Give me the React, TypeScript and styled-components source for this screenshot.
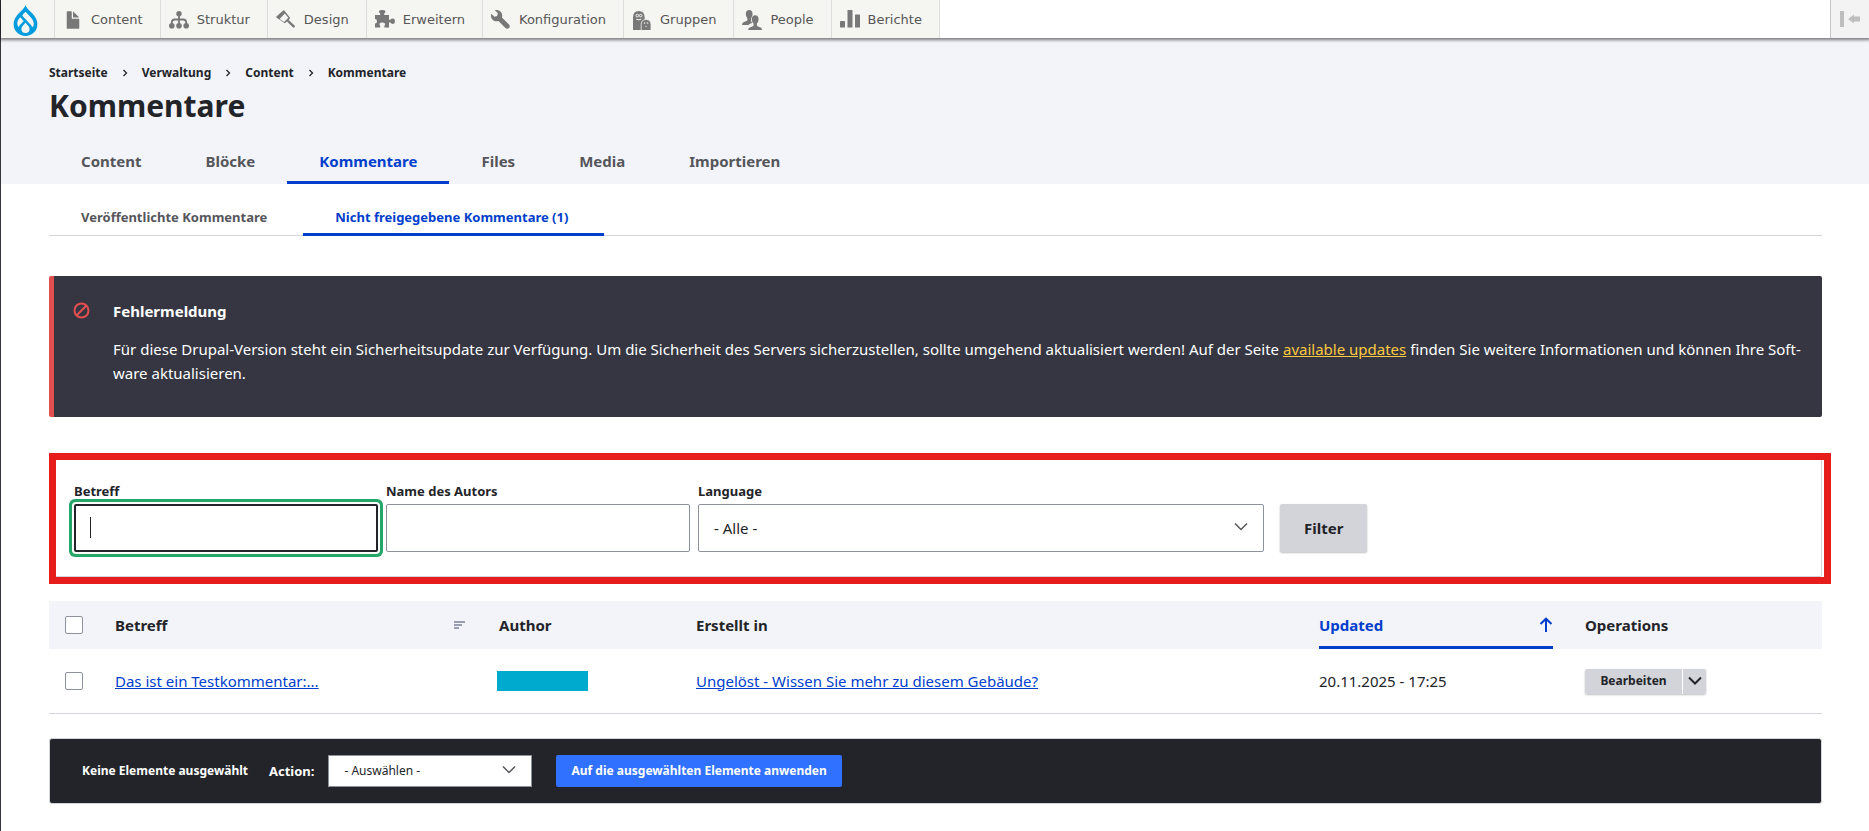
import React from 'react';
import styled, { createGlobalStyle, css } from 'styled-components';
import { SiDrupal } from 'react-icons/si';

const color = {
  text: '#232429',
  muted: '#55565b',
  blue: '#003ecc',
  primary: '#3171ff',
  headerBg: '#f3f4f9',
  line: '#d3d4d9',
  inputBorder: '#8e929c',
  focus: '#26a769',
  error: '#e34f4f',
  icon: '#787878',
};

const GlobalStyle = createGlobalStyle`
  *, *::before, *::after { box-sizing: border-box; }
  body {
    margin: 0;
    background: #fff;
    color: ${color.text};
    font: 15px/24px "Noto Sans", "Open Sans", sans-serif;
  }
  button, input, select { font: inherit; color: inherit; }
`;

const Page = styled.div`
  min-height: 100vh;
  border-left: 1px solid #35353b;
`;

/* Toolbar */

const Toolbar = styled.nav`
  position: relative;
  display: flex;
  height: 38px;
  background: #fff;
  box-shadow: 0 1px 3px 1px rgba(0, 0, 0, 0.5);
  font: 13px/20px "DejaVu Sans", Verdana, sans-serif;
`;

const ToolbarHome = styled.a`
  display: flex;
  align-items: center;
  justify-content: center;
  width: 54px;
  padding: 2px 4px 0 0;
  background: #f5f5f2;
  border-right: 1px solid #ddd;
  color: #009cde;
`;

const ToolbarLink = styled.a`
  display: flex;
  align-items: center;
  gap: 8px;
  padding: 2px 17px 0 8px;
  background: #f5f5f2;
  border-right: 1px solid #ddd;
  color: #565656;
  text-decoration: none;
`;

const ToolbarIcon = styled.svg`
  width: 20px;
  height: 20px;
  fill: ${color.icon};
`;

const ToolbarToggle = styled.button`
  display: flex;
  align-items: center;
  justify-content: center;
  width: 39px;
  margin-left: auto;
  padding: 0;
  background: #f3f3f3;
  border: 0;
  border-left: 1px solid #c4c4c4;
`;

/* Page header */

const Header = styled.header`
  padding: 26px 47px 0 48px;
  background: ${color.headerBg};
`;

const Breadcrumb = styled.ol`
  display: flex;
  align-items: center;
  gap: 14px;
  margin: 0 0 6px;
  padding: 0;
  list-style: none;
  font-size: 12px;
  line-height: 18px;
  font-weight: 700;
`;

const Crumb = styled.li`
  display: flex;
  align-items: center;
  gap: 14px;
  a { color: inherit; text-decoration: none; }
`;

const Title = styled.h1`
  margin: 0 0 14px;
  font-size: 30px;
  line-height: 36px;
`;

const Tabs = styled.nav`
  display: flex;
`;

const SubTabs = styled(Tabs)`
  margin-top: 12px;
  box-shadow: inset 0 -1px ${color.line};
  font-size: 13px;
`;

const tabBase = css<{ $active?: boolean }>`
  display: flex;
  align-items: center;
  border: solid transparent;
  border-width: 3px 0;
  border-bottom-color: ${p => (p.$active ? color.blue : 'transparent')};
  color: ${p => (p.$active ? color.blue : color.muted)};
  font-weight: 700;
  text-decoration: none;
`;

const Tab = styled.a<{ $active?: boolean }>`
  ${tabBase}
  height: 46px;
  padding: 0 32px;
`;

const SubTab = styled.a<{ $active?: boolean }>`
  ${tabBase}
  height: 40px;
  padding: 2px 36px 0 32px;
`;

const Main = styled.main`
  padding: 0 47px 28px 48px;
`;

/* Error message */

const Message = styled.section`
  display: flex;
  margin-top: 40px;
  padding: 23px 20px 32px 19px;
  background: #353641;
  border-left: 5px solid ${color.error};
  border-radius: 2px;
  color: #fff;
  svg { flex: none; margin: 3px 23px 0 0; }
`;

const MessageTitle = styled.h2`
  margin: 0 0 14px;
  font-size: 15px;
  line-height: 24px;
`;

const MessageText = styled.p`
  margin: 0;
  a { color: #fdca40; }
`;

/* Filter form */

const FilterCard = styled.form`
  position: relative;
  display: flex;
  flex-wrap: wrap;
  align-items: flex-end;
  gap: 8px;
  margin-top: 36px;
  padding: 27px 24px 24px;
  border: 1px solid ${color.line};
  border-radius: 2px;
  &::after {
    content: "";
    position: absolute;
    inset: -1px -10px -8px -1px;
    border: 7px solid #e71d1d;
    pointer-events: none;
  }
`;

const Field = styled.div<{ $width: number }>`
  display: flex;
  flex-direction: column;
  gap: 3px;
  width: ${p => p.$width}px;
  max-width: 100%;
`;

const Label = styled.label`
  font-size: 13px;
  line-height: 20px;
  font-weight: 700;
`;

const Control = styled.div`
  position: relative;
  display: flex;
  svg { position: absolute; top: 50%; right: 16px; margin-top: -6px; pointer-events: none; }
`;

const TextInput = styled.input<{ $focused?: boolean }>`
  width: 100%;
  height: 48px;
  padding: 0 15px;
  background: #fff;
  border: 1px solid ${color.inputBorder};
  border-radius: 2px;
  outline: none;
  ${p => p.$focused && css`
    border: 2px solid ${color.text};
    box-shadow: 0 0 0 2px #fff, 0 0 0 5px ${color.focus};
    caret-color: transparent;
  `}
`;

const Caret = styled.span`
  position: absolute;
  top: 13px;
  left: 16px;
  width: 1px;
  height: 21px;
  background: ${color.text};
`;

const Select = styled.select<{ $small?: boolean }>`
  appearance: none;
  width: 100%;
  height: ${p => (p.$small ? 32 : 48)}px;
  padding: 0 40px 0 15px;
  background: #fff;
  border: 1px solid ${color.inputBorder};
  border-radius: ${p => (p.$small ? 0 : 2)}px;
  color: ${color.text};
  font-size: ${p => (p.$small ? 12 : 15)}px;
  font-weight: 400;
`;

const FilterButton = styled.button`
  height: 48px;
  margin-left: 8px;
  padding: 0 24px;
  background: #d3d4d9;
  border: 0;
  border-radius: 2px;
  box-shadow: 0 1px 2px rgba(0, 0, 0, 0.25);
  font-weight: 700;
`;

/* Comment table */

const Table = styled.table`
  width: 100%;
  margin-top: 24px;
  border-collapse: collapse;
  table-layout: fixed;
`;

const Col = styled.col<{ $width?: number }>`
  width: ${p => (p.$width ? `${p.$width}px` : 'auto')};
`;

const Th = styled.th`
  height: 48px;
  padding: 0 16px;
  background: ${color.headerBg};
  text-align: left;
`;

const Td = styled.td`
  height: 64px;
  padding: 0 16px;
  border-bottom: 1px solid ${color.line};
  > a { color: ${color.blue}; }
`;

const SortLink = styled.a<{ $active?: boolean }>`
  display: flex;
  align-items: center;
  justify-content: space-between;
  height: 48px;
  padding-right: ${p => (p.$active ? 0 : 2)}px;
  box-shadow: ${p => (p.$active ? `inset 0 -3px ${color.blue}` : 'none')};
  color: ${p => (p.$active ? color.blue : 'inherit')};
  text-decoration: none;
`;

const Checkbox = styled.input`
  appearance: none;
  display: block;
  width: 18px;
  height: 18px;
  margin: 0;
  background: #fff;
  border: 1px solid ${color.inputBorder};
  border-radius: 2px;
`;

const Redacted = styled.div`
  width: 91px;
  height: 20px;
  margin-left: -2px;
  background: #00aacf;
`;

const DropButton = styled.div`
  display: inline-flex;
  gap: 1px;
  vertical-align: middle;
  border-radius: 2px;
  box-shadow: 0 1px 2px rgba(0, 0, 0, 0.25);
  background: #fff;
`;

const DropAction = styled.button<{ $toggle?: boolean }>`
  display: flex;
  align-items: center;
  justify-content: center;
  width: ${p => (p.$toggle ? 23 : 97)}px;
  height: 25px;
  padding: 0;
  background: #d3d4d9;
  border: 0;
  border-radius: ${p => (p.$toggle ? '0 2px 2px 0' : '2px 0 0 2px')};
  font-size: 12px;
  font-weight: 700;
`;

/* Bulk actions */

const BulkBar = styled.form`
  display: flex;
  flex-wrap: wrap;
  align-items: center;
  margin-top: 24px;
  padding: 16px 32px;
  background: #232429;
  border: 1px solid ${color.line};
  border-radius: 3px;
  color: #fff;
  font-size: 12px;
  font-weight: 700;
`;

const BulkStatus = styled.span`
  margin-right: 21px;
`;

const BulkLabel = styled.label`
  margin-right: 14px;
  font-size: 13px;
`;

const BulkControl = styled(Control)`
  width: 204px;
  margin-right: 24px;
`;

const ApplyButton = styled.button`
  height: 32px;
  padding: 0 15px;
  background: ${color.primary};
  border: 0;
  border-radius: 2px;
  color: #fff;
`;

const Chevron = ({ stroke = '#55565b', width = 1.5 }: { stroke?: string; width?: number }) => (
  <svg width="14" height="10" viewBox="0 0 14 10" fill="none" stroke={stroke} strokeWidth={width} aria-hidden="true">
    <path d="M1 1.5 7 7.5 13 1.5" />
  </svg>
);

const toolbarItems: { label: string; icon: React.ReactNode }[] = [
  {
    label: 'Content',
    icon: <g transform="translate(0 0) scale(1.25)"><path d="M12.500 7h-5A.5.5 0 0 1 7 6.500V1.500A.5.5 0 0 0 6.500 1h-3a.5.5 0 0 0-.5.5v13a.5.5 0 0 0 .5.5h9a.5.5 0 0 0 .5-.5v-7a.5.5 0 0 0-.5-.5zM8.500 6h4c.275 0 .34-.159.146-.354L8.353 1.354C8.158 1.159 8 1.225 8 1.500v4a.5.5 0 0 0 .5.500z" /></g>,
  },
  {
    label: 'Struktur',
    icon: (
      <>
        <circle cx="10" cy="3.700" r="2.700" />
        <circle cx="2.800" cy="15.800" r="2.800" />
        <circle cx="10" cy="15.800" r="2.800" />
        <circle cx="17.200" cy="15.800" r="2.800" />
        <path d="M10 4v11M2.800 15v-2.500q0-3 3-3h8.400q3 0 3 3V15" fill="none" stroke={color.icon} strokeWidth="1.800" />
      </>
    ),
  },
  {
    label: 'Design',
    icon: (
      <path fillRule="evenodd" d="M7.500.2Q8 0 8.300.5L14.200 8l-1.600 2 6 5.600q.7.900 0 1.700-1 .8-1.800 0L11 11.600 8.800 13.300.4 7.400Q0 6.800.4 6.400zM8.800 3.400 3.600 8.900l4.500 3.100 4.200-4.300z" />
    ),
  },
  {
    label: 'Erweitern',
    icon: <path d="M0 5h5.200V3.600Q3.800 2.600 4 1q.5-1 3.200-1t3.200 1q.2 1.600-1.200 2.600V5H14v4.800h1.400Q16 8.400 18 8.400q2 .2 2 2.800t-2 2.800q-2 0-2.600-1.400H14v5H9.400v-1.800q1-1 .6-2.200-.8-1.200-2.700-1.200t-2.700 1.200q-.4 1.200.6 2.200v1.800H0v-4.200q2 .1 2-2.200T0 8.900z" />,
  },
  {
    label: 'Konfiguration',
    icon: <g transform="scale(1.250)"><path d="M14.416 11.586 8.750 5.921c.15-.449.252-.921.252-1.421C9.002 2.015 6.986 0 4.500 0c-.505 0-.981.102-1.434.255l2.431 2.431-.588 2.196-2.196.588L.268 3.025C.106 3.489 0 3.981 0 4.500 0 6.986 2.014 9 4.500 9c.5 0 .972-.102 1.421-.251l5.667 5.665c.781.781 2.047.781 2.828 0s.781-2.047 0-2.828z" /></g>,
  },
  {
    label: 'Gruppen',
    icon: (
      <>
        <path d="M1 20V7.200Q1.200 1 6.800 1t5.800 6.200V20z" />
        <path d="M9.200 20.500v-6.300q.3-4.700 4.900-4.700t4.900 4.700v6.300z" stroke="#f5f5f2" strokeWidth=".8" />
        <g fill="none" stroke="#f5f5f2" strokeWidth="1">
          <circle cx="5.300" cy="5.600" r="1.300" />
          <circle cx="8.700" cy="5.600" r="1.300" />
          <path d="M4.300 9.200q2.700 1.200 5 0" />
        </g>
        <g fill="#f5f5f2">
          <circle cx="12.600" cy="13" r=".8" />
          <circle cx="15.600" cy="13" r=".8" />
          <circle cx="14.100" cy="16.300" r=".6" />
        </g>
      </>
    ),
  },
  {
    label: 'People',
    icon: (
      <>
        <path d="M3.800 4Q4 0 7.200 0t3.400 4q0 1-.5 2.200Q8.600 8 9 10.500q.5 2 1.200 2.500-2.500.5-3.800 2H0q0-2 1.500-2.800L5 10.800Q6 10 5.200 8 3.800 6.500 3.800 4z" />
        <path d="M9.800 9.500q.2-4.200 3.400-4.200t3.400 4.200q-.1 2.500-1.600 4-.7 2 .5 2.700l3.200 1.200Q20 18.200 20 20H6.200q0-1.800 1.500-2.600l3.300-1.200q1.200-.7.500-2.700-1.600-1.500-1.700-4z" />
      </>
    ),
  },
  {
    label: 'Berichte',
    icon: (
      <>
        <rect x="0" y="11" width="5" height="6.500" rx=".6" />
        <rect x="7.500" y="0" width="5" height="17.500" rx=".6" />
        <rect x="15" y="4.500" width="5" height="13" rx=".6" />
      </>
    ),
  },
];

const crumbs = ['Startseite', 'Verwaltung', 'Content', 'Kommentare'];
const tabs = ['Content', 'Blöcke', 'Kommentare', 'Files', 'Media', 'Importieren'];

export default function App() {
  return (
    <>
      <GlobalStyle />
      <Page>
        <Toolbar aria-label="Toolbar">
          <ToolbarHome href="#" aria-label="Home"><SiDrupal size={31} /></ToolbarHome>
          {toolbarItems.map(item => (
            <ToolbarLink href="#" key={item.label}>
              <ToolbarIcon viewBox="0 0 20 20" aria-hidden="true">{item.icon}</ToolbarIcon>
              <span>{item.label}</span>
            </ToolbarLink>
          ))}
          <ToolbarToggle type="button" aria-label="Vertical orientation">
            <svg width="20" height="16" viewBox="0 0 20 16" fill="#bebebe">
              <path d="M0 0h4v16H0zM8 8l6-4.500v2h6v5h-6v2z" />
            </svg>
          </ToolbarToggle>
        </Toolbar>

        <Header>
          <nav aria-label="Breadcrumb">
            <Breadcrumb>
              {crumbs.map((crumb, i) => (
                <Crumb key={crumb}>
                  {i > 0 && (
                    <svg width="6" height="8" viewBox="0 0 6 8" fill="none" stroke={color.text} strokeWidth="1.300" aria-hidden="true">
                      <path d="M1.500 1l3 3-3 3" />
                    </svg>
                  )}
                  <a href="#">{crumb}</a>
                </Crumb>
              ))}
            </Breadcrumb>
          </nav>
          <Title>Kommentare</Title>
          <Tabs aria-label="Tabs">
            {tabs.map(tab => (
              <Tab href="#" key={tab} $active={tab === 'Kommentare'}>{tab}</Tab>
            ))}
          </Tabs>
        </Header>

        <Main>
          <SubTabs aria-label="Secondary tabs">
            <SubTab href="#">Veröffentlichte Kommentare</SubTab>
            <SubTab href="#" $active>Nicht freigegebene Kommentare (1)</SubTab>
          </SubTabs>

          <Message role="alert">
            <svg width="17" height="17" viewBox="0 0 17 17" fill="none" stroke={color.error} strokeWidth="2" aria-hidden="true">
              <circle cx="8.500" cy="8.500" r="7" />
              <path d="M13.300 3.700 3.700 13.300" />
            </svg>
            <div>
              <MessageTitle>Fehlermeldung</MessageTitle>
              <MessageText>
                Für diese Drupal-Version steht ein Sicherheitsupdate zur Verfügung. Um die Sicherheit des Servers
                sicherzustellen, sollte umgehend aktualisiert werden! Auf der Seite <a href="#">available updates</a> finden
                Sie weitere Informationen und können Ihre Soft&shy;ware aktualisieren.
              </MessageText>
            </div>
          </Message>

          <FilterCard>
            <Field $width={304}>
              <Label htmlFor="subject">Betreff</Label>
              <Control>
                <TextInput id="subject" type="text" $focused />
                <Caret />
              </Control>
            </Field>
            <Field $width={304}>
              <Label htmlFor="author">Name des Autors</Label>
              <Control><TextInput id="author" type="text" /></Control>
            </Field>
            <Field $width={566}>
              <Label htmlFor="language">Language</Label>
              <Control>
                <Select id="language"><option>- Alle -</option></Select>
                <Chevron />
              </Control>
            </Field>
            <FilterButton type="button">Filter</FilterButton>
          </FilterCard>

          <Table>
            <colgroup>
              <Col $width={50} />
              <Col $width={384} />
              <Col $width={197} />
              <Col />
              <Col $width={266} />
              <Col $width={253} />
            </colgroup>
            <thead>
              <tr>
                <Th><Checkbox type="checkbox" aria-label="Select all rows" /></Th>
                <Th>
                  <SortLink href="#">
                    Betreff
                    <svg width="11" height="8" viewBox="0 0 11 8" fill="#9a9cb0" aria-hidden="true">
                      <path d="M0 0h11v2H0zM0 3h8v2H0zM0 6h5v2H0z" />
                    </svg>
                  </SortLink>
                </Th>
                <Th>Author</Th>
                <Th>Erstellt in</Th>
                <Th>
                  <SortLink href="#" $active>
                    Updated
                    <svg width="14" height="16" viewBox="0 0 14 16" fill="none" stroke={color.blue} strokeWidth="2" aria-hidden="true">
                      <path d="M7 15V2M1.500 7 7 1.700 12.500 7" />
                    </svg>
                  </SortLink>
                </Th>
                <Th>Operations</Th>
              </tr>
            </thead>
            <tbody>
              <tr>
                <Td><Checkbox type="checkbox" aria-label="Select row" /></Td>
                <Td><a href="#">Das ist ein Testkommentar:...</a></Td>
                <Td><Redacted /></Td>
                <Td><a href="#">Ungelöst - Wissen Sie mehr zu diesem Gebäude?</a></Td>
                <Td>20.11.2025 - 17:25</Td>
                <Td>
                  <DropButton>
                    <DropAction type="button">Bearbeiten</DropAction>
                    <DropAction type="button" $toggle aria-label="More actions"><Chevron stroke="#232429" width={2} /></DropAction>
                  </DropButton>
                </Td>
              </tr>
            </tbody>
          </Table>

          <BulkBar>
            <BulkStatus>Keine Elemente ausgewählt</BulkStatus>
            <BulkLabel htmlFor="action">Action:</BulkLabel>
            <BulkControl>
              <Select id="action" $small><option>- Auswählen -</option></Select>
              <Chevron />
            </BulkControl>
            <ApplyButton type="button">Auf die ausgewählten Elemente anwenden</ApplyButton>
          </BulkBar>
        </Main>
      </Page>
    </>
  );
}
